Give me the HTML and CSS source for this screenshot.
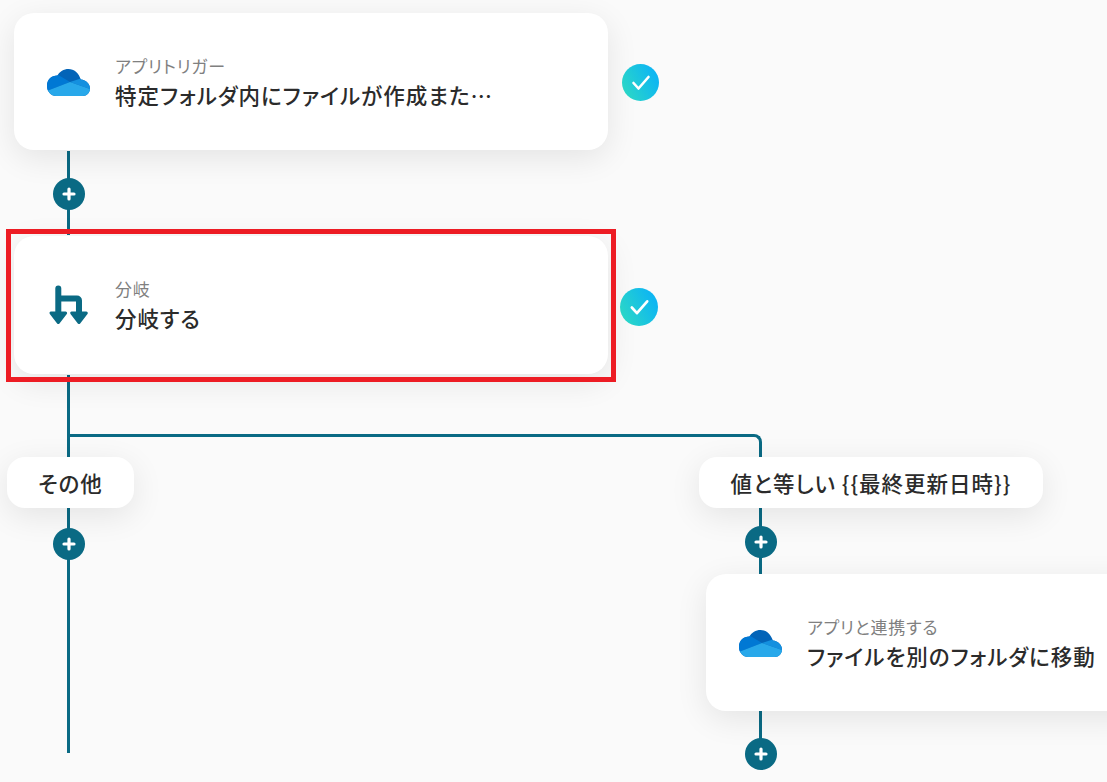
FILE: index.html
```html
<!DOCTYPE html>
<html lang="ja">
<head>
    <meta charset="UTF-8">
    <meta name="viewport" content="width=device-width, initial-scale=1.0">
    <title>フロー</title>
    <link rel="stylesheet" href="styles.css">
</head>
<body>
    <svg class="sprite" aria-hidden="true">
        <defs>
            <clipPath id="cloudClip">
                <path d="M9 27H35.500C40 27 43 23.500 43 19.500C43 14.800 39 11 33.800 10.500C31.800 4 27 0 21.500 0C16.700 0 12.700 2.500 10.500 6.500C4.500 6.500 0 10.500 0 16.800C0 22.800 4 27 9 27Z"/>
            </clipPath>
            <symbol id="onedrive" viewBox="0 0 43 27">
                <g clip-path="url(#cloudClip)">
                    <rect width="43" height="27" fill="#0364b8"/>
                    <polygon points="-1,0 10.500,5.500 23,13 1,21.500 -1,27" fill="#0078d4"/>
                    <polygon points="33.800,9.500 23,13 43,20 44,27 44,8" fill="#1490df"/>
                    <polygon points="1,21.500 23,13 43,20 44,28 0,28" fill="#28a8ea"/>
                </g>
            </symbol>
            <symbol id="plus" viewBox="0 0 32 32">
                <circle cx="16" cy="16" r="16" fill="#0a6a84"/>
                <path d="M16 11V21M11 16H21" stroke="#fff" stroke-width="3.2" stroke-linecap="round"/>
            </symbol>
            <linearGradient id="checkFill" x1="0" y1="1" x2="1" y2="0.5">
                <stop offset="0" stop-color="#2fdcc0"/>
                <stop offset="1" stop-color="#0eb6f2"/>
            </linearGradient>
            <symbol id="check" viewBox="0 0 37 37">
                <circle cx="18.5" cy="18.5" r="18.5" fill="url(#checkFill)"/>
                <path d="M11.5 19L16.5 24.5L26.5 13" fill="none" stroke="#fff" stroke-width="2.6" stroke-linecap="round" stroke-linejoin="round"/>
            </symbol>
        </defs>
    </svg>

    <div class="flow">
        <!-- 線 -->
        <div class="line line-top"></div>
        <div class="line line-main"></div>
        <div class="line-branch"></div>
        <div class="line line-right-a"></div>
        <div class="line line-right-b"></div>

        <!-- カード -->
        <div class="card card-trigger">
            <svg class="card-icon"><use href="#onedrive"/></svg>
            <div class="card-text">
                <div class="card-sub">アプリトリガー</div>
                <div class="card-title">特定フォルダ内にファイルが作成また…</div>
            </div>
        </div>

        <div class="card card-branch">
            <svg class="card-icon branch-icon" viewBox="0 0 43 40">
                <path d="M11.300 3.500V29M11.300 13.500H30A2 2 0 0 1 32 15.500V29" fill="none" stroke="#0a6a84" stroke-width="6" stroke-linecap="round" stroke-linejoin="round"/>
                <path d="M4 28H18.600L11.300 37.500Z" fill="#0a6a84" stroke="#0a6a84" stroke-width="3" stroke-linejoin="round"/>
                <path d="M24.700 28H39.300L32 37.500Z" fill="#0a6a84" stroke="#0a6a84" stroke-width="3" stroke-linejoin="round"/>
            </svg>
            <div class="card-text">
                <div class="card-sub">分岐</div>
                <div class="card-title">分岐する</div>
            </div>
        </div>
        <div class="highlight"></div>

        <div class="card card-move">
            <svg class="card-icon"><use href="#onedrive"/></svg>
            <div class="card-text">
                <div class="card-sub">アプリと連携する</div>
                <div class="card-title">ファイルを別のフォルダに移動</div>
            </div>
        </div>

        <!-- 分岐ラベル -->
        <div class="pill pill-other">その他</div>
        <div class="pill pill-value">値と等しい {{最終更新日時}}</div>

        <!-- ＋ボタン -->
        <svg class="add add-1"><use href="#plus"/></svg>
        <svg class="add add-2"><use href="#plus"/></svg>
        <svg class="add add-3"><use href="#plus"/></svg>
        <svg class="add add-4"><use href="#plus"/></svg>

        <!-- 完了マーク -->
        <svg class="done done-1"><use href="#check"/></svg>
        <svg class="done done-2"><use href="#check"/></svg>
    </div>
</body>
</html>
```

FILE: styles.css
```css
html, body {
    margin: 0;
    padding: 0;
    height: 100%;
    overflow: hidden;
}

body {
    background-color: #fafafa;
    color: #2b2b2b;
    font-family: "Noto Sans CJK JP", "Noto Sans", sans-serif;
}

.sprite {
    position: absolute;
    width: 0;
    height: 0;
}

.flow {
    position: relative;
    width: 1107px;
    height: 782px;
    overflow: hidden;
}

/* lines */
.line {
    position: absolute;
    width: 3px;
    background-color: #0a6a84;
}

.line-top {
    left: 67px;
    top: 151px;
    height: 84px;
}

.line-main {
    left: 67px;
    top: 375px;
    height: 378px;
}

.line-branch {
    position: absolute;
    left: 70px;
    top: 434px;
    width: 689px;
    height: 24px;
    border-top: 3px solid #0a6a84;
    border-right: 3px solid #0a6a84;
    border-top-right-radius: 8px;
}

.line-right-a {
    left: 759px;
    top: 505px;
    height: 70px;
}

.line-right-b {
    left: 759px;
    top: 710px;
    height: 30px;
}

/* cards */
.card {
    position: absolute;
    box-sizing: border-box;
    display: flex;
    align-items: center;
    gap: 25px;
    padding-left: 33px;
    background-color: #fff;
    border-radius: 20px;
    box-shadow: 0 8px 32px rgba(0, 0, 0, 0.09);
}

.card-trigger {
    left: 14px;
    top: 13px;
    width: 594px;
    height: 137px;
}

.card-branch {
    left: 14px;
    top: 236px;
    width: 594px;
    height: 138px;
    padding-bottom: 2px;
}

.card-move {
    left: 706px;
    top: 574px;
    width: 440px;
    height: 137px;
}

.card-icon {
    flex: none;
    width: 43px;
    height: 27px;
    margin-top: 2px;
}

.branch-icon {
    height: 40px;
}

.card-text {
    display: flex;
    flex-direction: column;
    gap: 3px;
    padding-top: 2px;
}

.card-sub {
    font-size: 17px;
    line-height: 22px;
    letter-spacing: 0.8px;
    font-feature-settings: "palt";
    color: #808080;
}

.card-title {
    font-size: 21.5px;
    line-height: 30px;
    font-weight: 500;
    letter-spacing: 1px;
    font-feature-settings: "palt";
    white-space: nowrap;
}

.highlight {
    position: absolute;
    left: 6px;
    top: 229px;
    width: 600px;
    height: 143px;
    border: 5px solid #ed1c24;
}

/* branch labels */
.pill {
    position: absolute;
    top: 457px;
    height: 51px;
    display: flex;
    align-items: center;
    justify-content: center;
    background-color: #fff;
    border-radius: 18px;
    font-size: 21.5px;
    font-weight: 500;
    letter-spacing: 1px;
    font-feature-settings: "palt";
    white-space: nowrap;
    box-shadow: 0 8px 32px rgba(0, 0, 0, 0.09);
}

.pill-other {
    left: 7px;
    width: 127px;
}

.pill-value {
    left: 699px;
    width: 344px;
}

/* add buttons */
.add {
    position: absolute;
    width: 32px;
    height: 32px;
}

.add-1 {
    left: 53px;
    top: 178px;
}

.add-2 {
    left: 53px;
    top: 528px;
}

.add-3 {
    left: 745px;
    top: 526px;
}

.add-4 {
    left: 745px;
    top: 738px;
}

/* done marks */
.done {
    position: absolute;
    width: 37px;
    height: 37px;
}

.done-1 {
    left: 622px;
    top: 64px;
}

.done-2 {
    left: 620px;
    top: 288px;
    width: 38px;
    height: 38px;
}
```
